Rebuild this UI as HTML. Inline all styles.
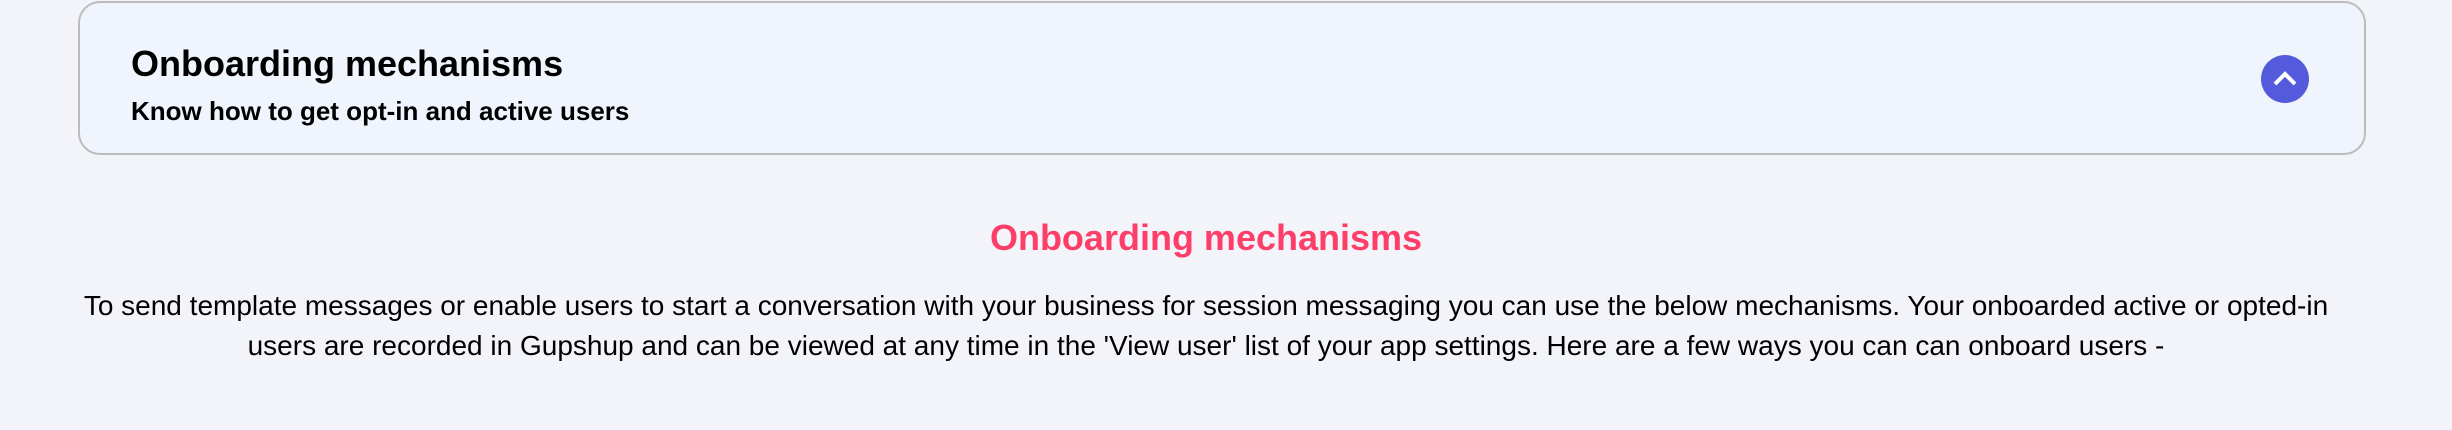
<!DOCTYPE html>
<html><head><meta charset="utf-8"><style>
html,body{margin:0;padding:0;width:2452px;height:430px;background:#f3f4f9;overflow:hidden;font-family:"Liberation Sans",Arial,sans-serif;color:#000}
.card{position:absolute;left:78px;top:1px;width:2284px;height:150px;border:2px solid #bcbcbc;border-radius:22px;background:#f0f4fc}
.t1{position:absolute;left:51px;top:39px;font-size:36px;font-weight:bold;line-height:44px;white-space:nowrap}
.t2{position:absolute;left:51px;top:93px;font-size:26px;font-weight:bold;line-height:30px;white-space:nowrap}
.btn{position:absolute;left:2181px;top:52px;width:48px;height:48px;border-radius:50%;background:#535bdc}
.h{position:absolute;left:0;width:2412px;top:216px;text-align:center;font-size:36px;font-weight:bold;color:#fd3e68;line-height:44px}
.p{position:absolute;left:66px;width:2280px;top:286px;text-align:center;font-size:28px;line-height:40px}
</style></head><body>
<div class="card">
<div class="t1">Onboarding mechanisms</div>
<div class="t2">Know how to get opt-in and active users</div>
<div class="btn"><svg width="48" height="48" viewBox="0 0 48 48"><path d="M14 29 L24 19 L34 29" fill="none" stroke="#fff" stroke-width="4"/></svg></div>
</div>
<div class="h">Onboarding mechanisms</div>
<div class="p">To send template messages or enable users to start a conversation with your business for session messaging you can use the below mechanisms. Your onboarded active or opted-in users are recorded in Gupshup and can be viewed at any time in the 'View user' list of your app settings. Here are a few ways you can can onboard users -</div>
</body></html>
